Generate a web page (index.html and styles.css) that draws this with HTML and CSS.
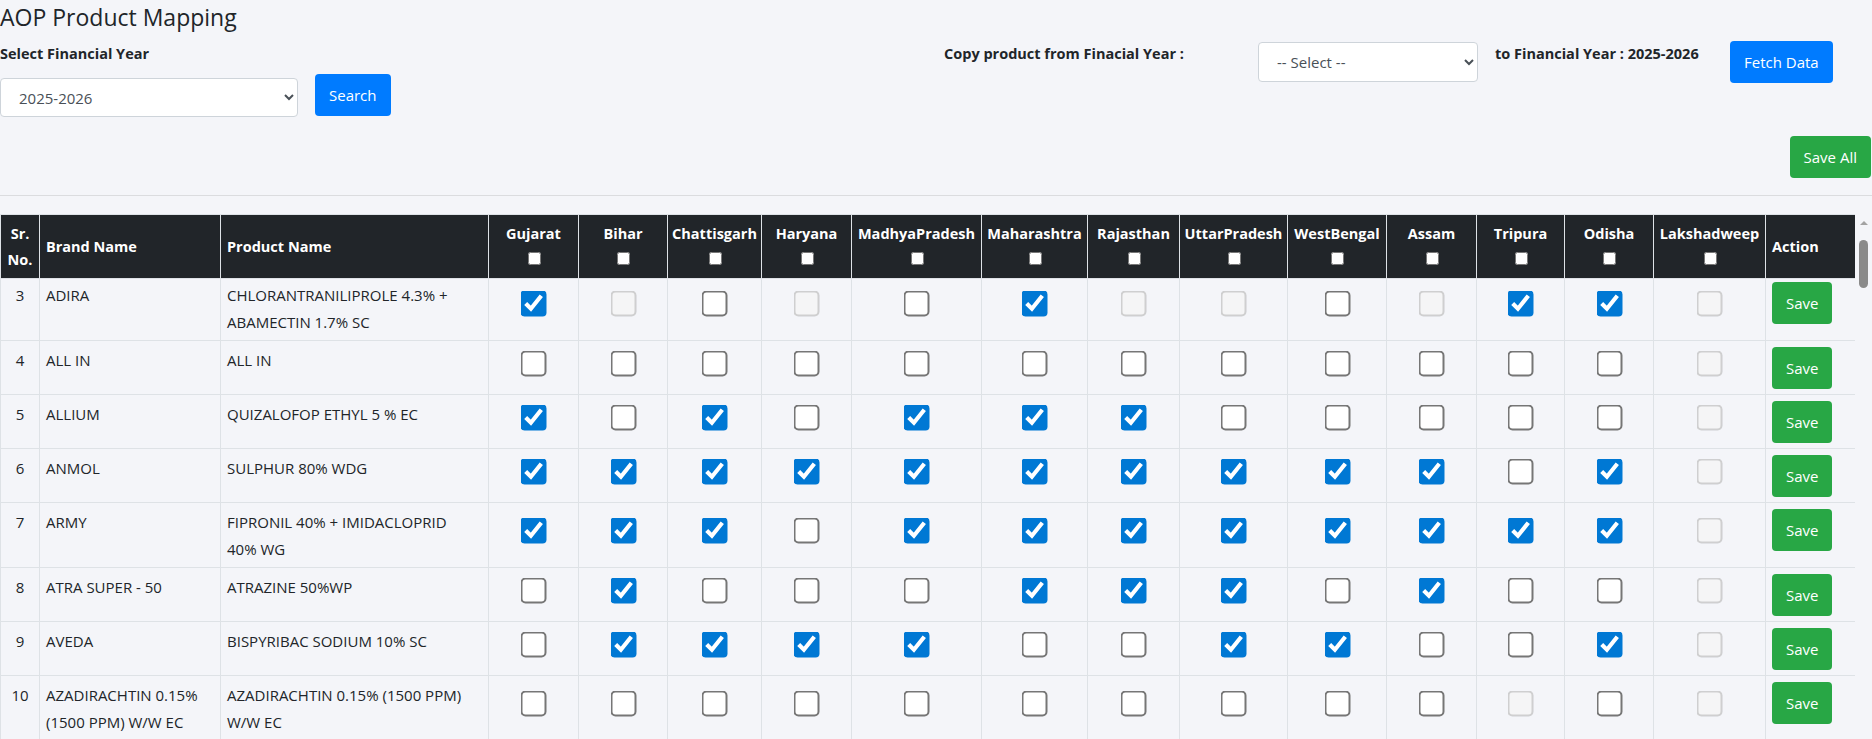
FILE: index.html
```html
<!DOCTYPE html>
<html lang="en">
<head>
<meta charset="utf-8">
<title>AOP Product Mapping</title>
<link rel="stylesheet" href="styles.css">
</head>
<body>
<div class="page">
  <h4 class="title">AOP Product Mapping</h4>

  <div class="filters">
    <div class="fy-group">
      <label class="field-label" for="fy">Select Financial Year</label>
      <div class="fy-row">
        <select id="fy" class="form-select fy-select">
          <option selected>2025-2026</option>
          <option>2024-2025</option>
        </select>
        <button class="btn btn-primary">Search</button>
      </div>
    </div>
    <div class="copy-group">
      <label class="field-label copy-label" for="copyFy">Copy product from Finacial Year :</label>
      <select id="copyFy" class="form-select copy-select">
        <option selected>-- Select --</option>
        <option>2024-2025</option>
      </select>
      <span class="field-label to-label">to Financial Year : 2025-2026</span>
      <button class="btn btn-primary fetch-btn">Fetch Data</button>
    </div>
  </div>

  <div class="actions-row">
    <button class="btn btn-success">Save All</button>
  </div>

  <hr class="divider">

  <div class="table-area">
    <div class="table-scroll">
      <table class="grid">
        <colgroup>
          <col style="width:39px"><col style="width:181px"><col style="width:268px">
          <col style="width:90px"><col style="width:89px"><col style="width:94px"><col style="width:90px">
          <col style="width:130px"><col style="width:106px"><col style="width:92px"><col style="width:108px">
          <col style="width:99px"><col style="width:90px"><col style="width:88px"><col style="width:89px">
          <col style="width:112px"><col style="width:90px">
        </colgroup>
        <thead>
          <tr>
            <th class="sr">Sr. No.</th>
            <th>Brand Name</th>
            <th>Product Name</th>
            <th class="state">Gujarat<br><input type="checkbox"></th>
            <th class="state">Bihar<br><input type="checkbox"></th>
            <th class="state">Chattisgarh<br><input type="checkbox"></th>
            <th class="state">Haryana<br><input type="checkbox"></th>
            <th class="state">MadhyaPradesh<br><input type="checkbox"></th>
            <th class="state">Maharashtra<br><input type="checkbox"></th>
            <th class="state">Rajasthan<br><input type="checkbox"></th>
            <th class="state">UttarPradesh<br><input type="checkbox"></th>
            <th class="state">WestBengal<br><input type="checkbox"></th>
            <th class="state">Assam<br><input type="checkbox"></th>
            <th class="state">Tripura<br><input type="checkbox"></th>
            <th class="state">Odisha<br><input type="checkbox"></th>
            <th class="state">Lakshadweep<br><input type="checkbox"></th>
            <th>Action</th>
          </tr>
        </thead>
        <tbody>
          <tr class="first-row">
            <td class="sr">3</td><td>ADIRA</td><td>CHLORANTRANILIPROLE 4.3% + ABAMECTIN 1.7% SC</td>
            <td class="chk"><input type="checkbox" checked></td>
            <td class="chk"><input type="checkbox" disabled></td>
            <td class="chk"><input type="checkbox"></td>
            <td class="chk"><input type="checkbox" disabled></td>
            <td class="chk"><input type="checkbox"></td>
            <td class="chk"><input type="checkbox" checked></td>
            <td class="chk"><input type="checkbox" disabled></td>
            <td class="chk"><input type="checkbox" disabled></td>
            <td class="chk"><input type="checkbox"></td>
            <td class="chk"><input type="checkbox" disabled></td>
            <td class="chk"><input type="checkbox" checked></td>
            <td class="chk"><input type="checkbox" checked></td>
            <td class="chk"><input type="checkbox" disabled></td>
            <td class="act"><button class="btn btn-success">Save</button></td>
          </tr>
          <tr>
            <td class="sr">4</td><td>ALL IN</td><td>ALL IN</td>
            <td class="chk"><input type="checkbox"></td>
            <td class="chk"><input type="checkbox"></td>
            <td class="chk"><input type="checkbox"></td>
            <td class="chk"><input type="checkbox"></td>
            <td class="chk"><input type="checkbox"></td>
            <td class="chk"><input type="checkbox"></td>
            <td class="chk"><input type="checkbox"></td>
            <td class="chk"><input type="checkbox"></td>
            <td class="chk"><input type="checkbox"></td>
            <td class="chk"><input type="checkbox"></td>
            <td class="chk"><input type="checkbox"></td>
            <td class="chk"><input type="checkbox"></td>
            <td class="chk"><input type="checkbox" disabled></td>
            <td class="act"><button class="btn btn-success">Save</button></td>
          </tr>
          <tr>
            <td class="sr">5</td><td>ALLIUM</td><td>QUIZALOFOP ETHYL 5 % EC</td>
            <td class="chk"><input type="checkbox" checked></td>
            <td class="chk"><input type="checkbox"></td>
            <td class="chk"><input type="checkbox" checked></td>
            <td class="chk"><input type="checkbox"></td>
            <td class="chk"><input type="checkbox" checked></td>
            <td class="chk"><input type="checkbox" checked></td>
            <td class="chk"><input type="checkbox" checked></td>
            <td class="chk"><input type="checkbox"></td>
            <td class="chk"><input type="checkbox"></td>
            <td class="chk"><input type="checkbox"></td>
            <td class="chk"><input type="checkbox"></td>
            <td class="chk"><input type="checkbox"></td>
            <td class="chk"><input type="checkbox" disabled></td>
            <td class="act"><button class="btn btn-success">Save</button></td>
          </tr>
          <tr>
            <td class="sr">6</td><td>ANMOL</td><td>SULPHUR 80% WDG</td>
            <td class="chk"><input type="checkbox" checked></td>
            <td class="chk"><input type="checkbox" checked></td>
            <td class="chk"><input type="checkbox" checked></td>
            <td class="chk"><input type="checkbox" checked></td>
            <td class="chk"><input type="checkbox" checked></td>
            <td class="chk"><input type="checkbox" checked></td>
            <td class="chk"><input type="checkbox" checked></td>
            <td class="chk"><input type="checkbox" checked></td>
            <td class="chk"><input type="checkbox" checked></td>
            <td class="chk"><input type="checkbox" checked></td>
            <td class="chk"><input type="checkbox"></td>
            <td class="chk"><input type="checkbox" checked></td>
            <td class="chk"><input type="checkbox" disabled></td>
            <td class="act"><button class="btn btn-success">Save</button></td>
          </tr>
          <tr>
            <td class="sr">7</td><td>ARMY</td><td>FIPRONIL 40% + IMIDACLOPRID 40%&nbsp;WG</td>
            <td class="chk"><input type="checkbox" checked></td>
            <td class="chk"><input type="checkbox" checked></td>
            <td class="chk"><input type="checkbox" checked></td>
            <td class="chk"><input type="checkbox"></td>
            <td class="chk"><input type="checkbox" checked></td>
            <td class="chk"><input type="checkbox" checked></td>
            <td class="chk"><input type="checkbox" checked></td>
            <td class="chk"><input type="checkbox" checked></td>
            <td class="chk"><input type="checkbox" checked></td>
            <td class="chk"><input type="checkbox" checked></td>
            <td class="chk"><input type="checkbox" checked></td>
            <td class="chk"><input type="checkbox" checked></td>
            <td class="chk"><input type="checkbox" disabled></td>
            <td class="act"><button class="btn btn-success">Save</button></td>
          </tr>
          <tr>
            <td class="sr">8</td><td>ATRA SUPER - 50</td><td>ATRAZINE 50%WP</td>
            <td class="chk"><input type="checkbox"></td>
            <td class="chk"><input type="checkbox" checked></td>
            <td class="chk"><input type="checkbox"></td>
            <td class="chk"><input type="checkbox"></td>
            <td class="chk"><input type="checkbox"></td>
            <td class="chk"><input type="checkbox" checked></td>
            <td class="chk"><input type="checkbox" checked></td>
            <td class="chk"><input type="checkbox" checked></td>
            <td class="chk"><input type="checkbox"></td>
            <td class="chk"><input type="checkbox" checked></td>
            <td class="chk"><input type="checkbox"></td>
            <td class="chk"><input type="checkbox"></td>
            <td class="chk"><input type="checkbox" disabled></td>
            <td class="act"><button class="btn btn-success">Save</button></td>
          </tr>
          <tr>
            <td class="sr">9</td><td>AVEDA</td><td>BISPYRIBAC SODIUM 10% SC</td>
            <td class="chk"><input type="checkbox"></td>
            <td class="chk"><input type="checkbox" checked></td>
            <td class="chk"><input type="checkbox" checked></td>
            <td class="chk"><input type="checkbox" checked></td>
            <td class="chk"><input type="checkbox" checked></td>
            <td class="chk"><input type="checkbox"></td>
            <td class="chk"><input type="checkbox"></td>
            <td class="chk"><input type="checkbox" checked></td>
            <td class="chk"><input type="checkbox" checked></td>
            <td class="chk"><input type="checkbox"></td>
            <td class="chk"><input type="checkbox"></td>
            <td class="chk"><input type="checkbox" checked></td>
            <td class="chk"><input type="checkbox" disabled></td>
            <td class="act"><button class="btn btn-success">Save</button></td>
          </tr>
          <tr>
            <td class="sr">10</td><td>AZADIRACHTIN 0.15% (1500 PPM) W/W EC</td><td>AZADIRACHTIN 0.15% (1500 PPM) W/W EC</td>
            <td class="chk"><input type="checkbox"></td>
            <td class="chk"><input type="checkbox"></td>
            <td class="chk"><input type="checkbox"></td>
            <td class="chk"><input type="checkbox"></td>
            <td class="chk"><input type="checkbox"></td>
            <td class="chk"><input type="checkbox"></td>
            <td class="chk"><input type="checkbox"></td>
            <td class="chk"><input type="checkbox"></td>
            <td class="chk"><input type="checkbox"></td>
            <td class="chk"><input type="checkbox"></td>
            <td class="chk"><input type="checkbox" disabled></td>
            <td class="chk"><input type="checkbox"></td>
            <td class="chk"><input type="checkbox" disabled></td>
            <td class="act"><button class="btn btn-success">Save</button></td>
          </tr>
        </tbody>
      </table>
    </div>
    <div class="scrollbar" aria-hidden="true">
      <span class="scrollbar-arrow"></span>
      <span class="scrollbar-thumb"></span>
    </div>
  </div>
</div>
</body>
</html>
```

FILE: styles.css
```css
* {
  box-sizing: border-box;
}

html,
body {
  margin: 0;
  padding: 0;
}

body {
  background: #f4f5f9;
  color: #212529;
  font-family: "Open Sans", "Noto Sans", sans-serif;
  font-size: 15px;
  overflow: hidden;
}

.title {
  margin: 0;
  padding-top: 2px;
  font-size: 23px;
  font-weight: 400;
  line-height: 30px;
  color: #212529;
}

.filters {
  display: flex;
  margin-top: 10px;
}

.fy-group {
  width: 944px;
  flex: none;
}

.field-label {
  display: block;
  font-weight: 700;
  font-size: 14.5px;
  line-height: 24px;
  margin-bottom: 8px;
}

.fy-row {
  display: flex;
  align-items: flex-start;
  gap: 17px;
}

.form-select {
  height: 39px;
  border: 1px solid #ced4da;
  border-radius: 4px;
  background-color: #fff;
  color: #495057;
  font-family: "Open Sans", "Noto Sans", sans-serif;
  font-size: 15px;
  padding: 0 8px 0 14px;
}

.fy-select {
  width: 298px;
  margin-top: 4px;
}

.copy-group {
  display: flex;
  align-items: flex-start;
}

.copy-label {
  width: 314px;
  margin: 0;
}

.copy-select {
  width: 220px;
  height: 40px;
  margin-right: 17px;
}

.to-label {
  width: 235px;
  margin: 0;
}

.btn {
  height: 42px;
  padding: 0 14px;
  border: 0;
  border-radius: 4px;
  color: #fff;
  font-family: "Open Sans", "Noto Sans", sans-serif;
  font-size: 15px;
  line-height: 42px;
  cursor: pointer;
}

.btn-primary {
  background: #007bff;
}

.btn-success {
  background: #28a745;
}

.fetch-btn {
  margin-top: -1px;
}

.actions-row {
  display: flex;
  justify-content: flex-end;
  margin-top: 19px;
  padding-right: 1px;
}

.divider {
  border: 0;
  border-top: 1px solid rgba(0, 0, 0, 0.1);
  margin: 17px 0 18px;
  height: 0;
}

.table-area {
  display: flex;
  height: calc(100vh - 214px);
}

.table-scroll {
  flex: 1;
  min-width: 0;
  overflow: hidden;
}

.scrollbar {
  flex: none;
  width: 17px;
  display: flex;
  flex-direction: column;
  align-items: center;
  padding-top: 7px;
}

.scrollbar-arrow {
  width: 0;
  height: 0;
  border-left: 4px solid transparent;
  border-right: 4px solid transparent;
  border-bottom: 4px solid #a3a3a3;
}

.scrollbar-thumb {
  width: 9px;
  height: 48px;
  margin-top: 15px;
  border-radius: 5px;
  background: #8a8a8a;
}

.grid {
  width: 100%;
  table-layout: fixed;
  border-collapse: collapse;
}

.grid th {
  background: #212529;
  color: #fff;
  font-weight: 700;
  font-size: 14.5px;
  line-height: 26px;
  padding: 6px 6px 5px;
  border: 1px solid #dee2e6;
  vertical-align: middle;
  text-align: left;
  white-space: nowrap;
}

.grid th.sr {
  padding-left: 0;
  padding-right: 0;
  text-align: center;
  white-space: normal;
}

.grid th.state {
  text-align: center;
  padding-left: 2px;
  padding-right: 2px;
}

.grid td {
  border: 1px solid #dee2e6;
  padding: 6px 6px 5px;
  line-height: 26.6px;
  vertical-align: top;
}

.grid .first-row td {
  padding-top: 3px;
}

.grid td.sr {
  text-align: center;
  padding-left: 0;
  padding-right: 0;
}

.grid td.chk {
  text-align: center;
  vertical-align: middle;
}

.grid td.chk input {
  display: block;
  margin: 0 auto 10px;
  transform: scale(2);
  accent-color: #0078d4;
}

.grid td.act .btn {
  vertical-align: top;
}
```
